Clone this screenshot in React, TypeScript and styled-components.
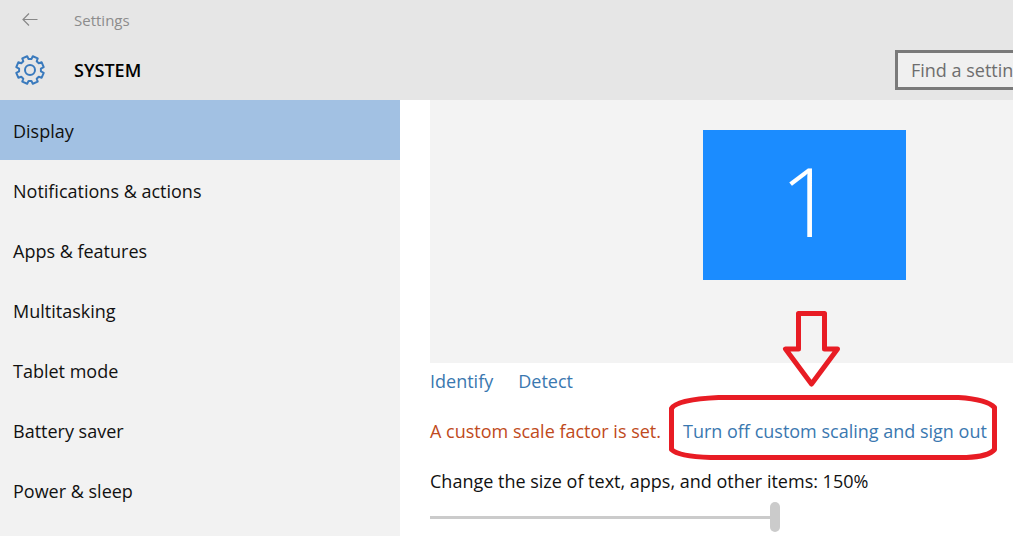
import React from 'react';
import styled, { createGlobalStyle } from 'styled-components';

const GlobalStyle = createGlobalStyle`
  *, *::before, *::after { box-sizing: border-box; }
  body {
    margin: 0;
    background: #fff;
    color: #111;
    font-family: "Open Sans", "Noto Sans", sans-serif;
    font-size: 18px;
    line-height: 30px;
    overflow: hidden;
  }
`;

const Page = styled.div`
  display: flex;
  flex-direction: column;
  min-height: 100vh;
`;

const Header = styled.header`
  background: #e6e6e6;
`;

const TitleBar = styled.div`
  display: flex;
  align-items: center;
  height: 40px;
  color: #8c8c8c;
  font-size: 15px;
`;

const IconSlot = styled.div`
  display: flex;
  flex: none;
  width: 74px;
  padding-left: 14px;
`;

const BackButton = styled.button`
  display: flex;
  justify-content: center;
  width: 32px;
  padding: 0;
  border: 0;
  background: none;
  color: #888;
`;

const HeadingBar = styled.div`
  display: flex;
  align-items: center;
  height: 60px;
`;

const Heading = styled.h1`
  flex: 1;
  margin: 0;
  font-size: 18px;
  font-weight: 600;
  color: #000;
`;

const SearchBox = styled.input`
  width: 118px;
  height: 40px;
  padding: 0 0 0 13px;
  border: 3px solid #7a7a7a;
  border-right: 0;
  border-radius: 0;
  background: #f0f0f0;
  font: inherit;
  color: #222;
  &::placeholder { color: #6e6e6e; opacity: 1; }
`;

const Body = styled.div`
  display: flex;
  flex: 1;
`;

const Sidebar = styled.nav`
  flex: none;
  width: 400px;
  background: #f2f2f2;
`;

const NavLink = styled.a<{ $active?: boolean }>`
  display: flex;
  align-items: center;
  height: 60px;
  padding: 2px 13px 0;
  background: ${(p) => (p.$active ? '#a2c1e3' : 'transparent')};
  color: #111;
  text-decoration: none;
`;

const Main = styled.main`
  flex: 1;
  min-width: 0;
  padding-left: 30px;
`;

const Preview = styled.section`
  height: 263px;
  padding: 30px 0 0 273px;
  background: #f3f3f3;
`;

const Monitor = styled.button`
  display: flex;
  align-items: center;
  justify-content: center;
  width: 203px;
  height: 150px;
  padding: 0 0 12px 6px;
  border: 0;
  background: #1b8cff;
  color: #fff;
  font: 300 96px "Open Sans", sans-serif;
`;

const Row = styled.div<{ $gap: number }>`
  display: flex;
  gap: ${(p) => p.$gap}px;
  padding-top: 3px;
  margin-bottom: 17px;
  white-space: nowrap;
`;

const Link = styled.a`
  color: #3a78b0;
  text-decoration: none;
`;

const Warning = styled.span`
  color: #bf4a20;
`;

const Highlighted = styled.span`
  position: relative;
`;

const Annotation = styled.svg`
  position: absolute;
  left: -16px;
  bottom: -17px;
  pointer-events: none;
`;

const ScaleField = styled.div`
  display: flex;
  flex-direction: column;
  align-items: flex-start;
  padding-top: 3px;
  white-space: nowrap;
`;

const Slider = styled.input`
  appearance: none;
  width: 350px;
  height: 30px;
  margin: 6px 0 0;
  background: none;
  &::-webkit-slider-runnable-track { height: 3px; background: #cbcbcb; }
  &::-webkit-slider-thumb {
    appearance: none;
    width: 10px;
    height: 30px;
    margin-top: -14px;
    border-radius: 5px;
    background: #cbcbcb;
  }
`;

const sections = [
  'Display',
  'Notifications & actions',
  'Apps & features',
  'Multitasking',
  'Tablet mode',
  'Battery saver',
  'Power & sleep',
];

const TEETH = 8;

function gearPath(cx: number, cy: number) {
  const profile: [number, number][] = [
    [-15, 11],
    [-11, 14],
    [11, 14],
    [15, 11],
  ];
  const points: string[] = [];
  for (let i = 0; i < TEETH; i++) {
    for (const [offset, radius] of profile) {
      const a = (((i + 0.5) * 360) / TEETH + offset) * (Math.PI / 180);
      points.push(`${(cx + radius * Math.cos(a)).toFixed(2)} ${(cy + radius * Math.sin(a)).toFixed(2)}`);
    }
  }
  return `M${points.join('L')}Z`;
}

function GearIcon() {
  return (
    <svg width="32" height="32" viewBox="0 0 32 32" fill="none" stroke="#3a7abd" strokeWidth="2" aria-hidden="true">
      <path d={gearPath(16, 16)} strokeLinejoin="round" />
      <circle cx="16" cy="16" r="5" />
    </svg>
  );
}

function BackIcon() {
  return (
    <svg width="16" height="14" viewBox="0 0 16 14" fill="none" stroke="currentColor" strokeWidth="1.2" aria-hidden="true">
      <path d="M15.5 6.500H1M7 .5L1 6.500l6 6" />
    </svg>
  );
}

function Callout() {
  return (
    <Annotation width="332" height="153" viewBox="0 0 332 153" fill="none" stroke="#e81c24" strokeWidth="5" strokeLinejoin="round" aria-hidden="true">
      <path d="M131.500 3.500H157.500V39H170.500L144.500 74L118.500 39H131.500Z" />
      <path d="M51.500 87.500H291.500Q320.500 89.500 327.500 97.500V139.500Q321.500 146.500 299.500 147.500H43.500Q11.500 146.500 4.500 139.500V98.500Q9.500 89.500 51.500 87.500Z" />
    </Annotation>
  );
}

export default function App() {
  return (
    <Page>
      <GlobalStyle />
      <Header>
        <TitleBar>
          <IconSlot>
            <BackButton type="button" aria-label="Back">
              <BackIcon />
            </BackButton>
          </IconSlot>
          Settings
        </TitleBar>
        <HeadingBar>
          <IconSlot>
            <GearIcon />
          </IconSlot>
          <Heading>SYSTEM</Heading>
          <SearchBox type="text" placeholder="Find a setting" aria-label="Find a setting" />
        </HeadingBar>
      </Header>
      <Body>
        <Sidebar>
          {sections.map((name, i) => (
            <NavLink key={name} href="#" $active={i === 0}>
              {name}
            </NavLink>
          ))}
        </Sidebar>
        <Main>
          <Preview>
            <Monitor type="button">1</Monitor>
          </Preview>
          <Row $gap={25}>
            <Link href="#">Identify</Link>
            <Link href="#">Detect</Link>
          </Row>
          <Row $gap={22}>
            <Warning>A custom scale factor is set.</Warning>
            <Highlighted>
              <Link href="#">Turn off custom scaling and sign out</Link>
              <Callout />
            </Highlighted>
          </Row>
          <ScaleField>
            <label htmlFor="scale">Change the size of text, apps, and other items: 150%</label>
            <Slider id="scale" type="range" min={100} max={150} step={25} defaultValue={150} />
          </ScaleField>
        </Main>
      </Body>
    </Page>
  );
}
